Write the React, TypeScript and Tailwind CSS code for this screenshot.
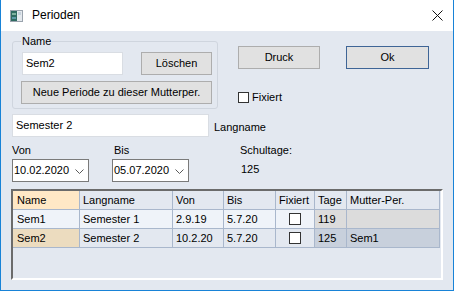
import { ReactNode } from 'react';

type Row = {
  name: string;
  lang: string;
  von: string;
  bis: string;
  tage: string;
  mutter: string;
};

const rows: Row[] = [
  { name: 'Sem1', lang: 'Semester 1', von: '2.9.19', bis: '5.7.20', tage: '119', mutter: '' },
  { name: 'Sem2', lang: 'Semester 2', von: '10.2.20', bis: '5.7.20', tage: '125', mutter: 'Sem1' },
];

const cols = [
  { label: 'Name', w: 'w-[67px] pl-[4px]' },
  { label: 'Langname', w: 'w-[93px] pl-[3px]' },
  { label: 'Von', w: 'w-[51px] pl-[3px]' },
  { label: 'Bis', w: 'w-[52px] pl-[3px]' },
  { label: 'Fixiert', w: 'w-[39px] pl-[3px]' },
  { label: 'Tage', w: 'w-[32px] pl-[3px]' },
  { label: 'Mutter-Per.', w: 'w-[93px] pl-[3px]' },
];

const Button = ({ children, className, isDefault }: { children: ReactNode; className: string; isDefault?: boolean }) => (
  <div
    className={`flex h-[23px] items-center justify-center border bg-[#e1e1e1] ${
      isDefault ? 'border-[#3f6596]' : 'border-[#adadad]'
    } ${className}`}
  >
    {children}
  </div>
);

const TextBox = ({ value, className }: { value: string; className: string }) => (
  <div className={`flex h-[23px] items-center border border-[#d9dde3] bg-white pl-[3px] ${className}`}>{value}</div>
);

const DatePicker = ({ value }: { value: string }) => (
  <div className="flex h-[23px] w-[77px] items-center justify-between border border-[#7a7a7a] bg-white pl-[1px] pr-[4px]">
    <span>{value}</span>
    <svg width="9" height="5" viewBox="0 0 9 5" className="mt-[1px]">
      <path d="M0.5 0.5 L4.5 4.5 L8.5 0.5" fill="none" stroke="#5a5a5a" strokeWidth="1" />
    </svg>
  </div>
);

const Check = ({ size }: { size: string }) => <div className={`border border-[#333] bg-white ${size}`} />;

const App = () => {
  return (
    <div className="h-[291px] w-[454px] overflow-hidden border-x border-b border-[#1883d7] font-['Liberation_Sans',Arial,sans-serif] text-[11px] leading-[13px] text-black">
      {/* title bar */}
      <div className="flex h-[31px] items-center bg-white">
        <svg width="13" height="12" viewBox="0 0 13 12" className="ml-[9px] mt-[1px]">
          <rect x="0.5" y="0.5" width="12" height="11" fill="#e4e9ee" stroke="#9aa3ad" />
          <rect x="1" y="1" width="6" height="10" fill="#2f6b62" />
          <rect x="2" y="3" width="4" height="2" fill="#7fb3a0" />
          <rect x="2" y="7" width="4" height="2" fill="#5c9aa8" />
          <rect x="8" y="2" width="3" height="3" fill="#c7d2dc" />
        </svg>
        <span className="ml-[9px] text-[12px]">Perioden</span>
        <svg width="11" height="11" viewBox="0 0 11 11" className="ml-auto mr-[10px]">
          <path d="M0.5 0.5 L10.5 10.5 M10.5 0.5 L0.5 10.5" stroke="#111" strokeWidth="1" />
        </svg>
      </div>

      {/* body */}
      <div className="flex h-[259px] flex-col bg-[#e3e8f0] pl-[11px]">
        <div className="flex items-start">
          <div className="relative mt-[10px] h-[68px] w-[206px] rounded-[3px] border border-[#cfd5de] pl-[8px] pt-[10px]">
            <span className="absolute -top-[7px] left-[8px] bg-[#e3e8f0] px-[1px]">Name</span>
            <div className="flex">
              <TextBox value="Sem2" className="ml-px w-[101px]" />
              <Button className="ml-[18px] w-[71px]">Löschen</Button>
            </div>
            <Button className="mt-[6px] w-[191px]">Neue Periode zu dieser Mutterper.</Button>
          </div>
          <div className="ml-[20px] mt-[15px] flex flex-col">
            <div className="flex gap-[26px]">
              <Button className="w-[82px]">Druck</Button>
              <Button className="w-[83px]" isDefault>
                Ok
              </Button>
            </div>
            <div className="mt-[22px] flex items-center">
              <Check size="h-[11px] w-[11px]" />
              <span className="ml-[3px]">Fixiert</span>
            </div>
          </div>
        </div>

        <div className="mt-[5px] flex items-center">
          <TextBox value="Semester 2" className="w-[197px]" />
          <span className="ml-[5px] mt-[3px]">Langname</span>
        </div>

        <div className="flex">
          <div className="flex flex-col">
            <span className="mt-[7px]">Von</span>
            <div className="mt-[2px]">
              <DatePicker value="10.02.2020" />
            </div>
          </div>
          <div className="ml-[23px] flex flex-col">
            <span className="mt-[7px] pl-[2px]">Bis</span>
            <div className="mt-[2px]">
              <DatePicker value="05.07.2020" />
            </div>
          </div>
          <div className="ml-[51px] flex flex-col">
            <span className="mt-[7px]">Schultage:</span>
            <span className="mt-[6px] pl-px">125</span>
          </div>
        </div>

        {/* grid */}
        <div className="-ml-px mt-[7px] h-[91px] w-[432px] border-2 border-b-white border-l-[#6b6b6b] border-r-white border-t-[#6b6b6b] bg-[#e3e8f0]">
          <div className="flex h-[19px]">
            {cols.map((c, i) => (
              <div
                key={c.label}
                className={`flex items-center border-b border-r border-[#a9b7cc] ${c.w} ${
                  i === 0 ? 'bg-[#ffe8c6]' : 'bg-[#e3e8f0]'
                }`}
              >
                {c.label}
              </div>
            ))}
          </div>
          {rows.map((r, ri) => {
            const sel = ri === 1;
            const base = sel ? 'bg-[#e3e8f0]' : 'bg-[#eff3f9]';
            const ro = sel ? 'bg-[#c8d0dc]' : 'bg-[#dcdcdc]';
            const cells = [r.name, r.lang, r.von, r.bis, '', r.tage, r.mutter];
            return (
              <div key={r.name} className="flex h-[19px]">
                {cells.map((v, i) => (
                  <div
                    key={i}
                    className={`flex items-center border-b border-r border-[#a9b7cc] ${cols[i].w} ${
                      i === 0 && sel ? 'bg-[#ecdcbf]' : i >= 5 ? ro : base
                    } ${i === 4 ? 'justify-center !pl-0' : ''}`}
                  >
                    {i === 4 ? <Check size="h-[12px] w-[12px]" /> : v}
                  </div>
                ))}
              </div>
            );
          })}
        </div>
      </div>
    </div>
  );
};

export default App;
